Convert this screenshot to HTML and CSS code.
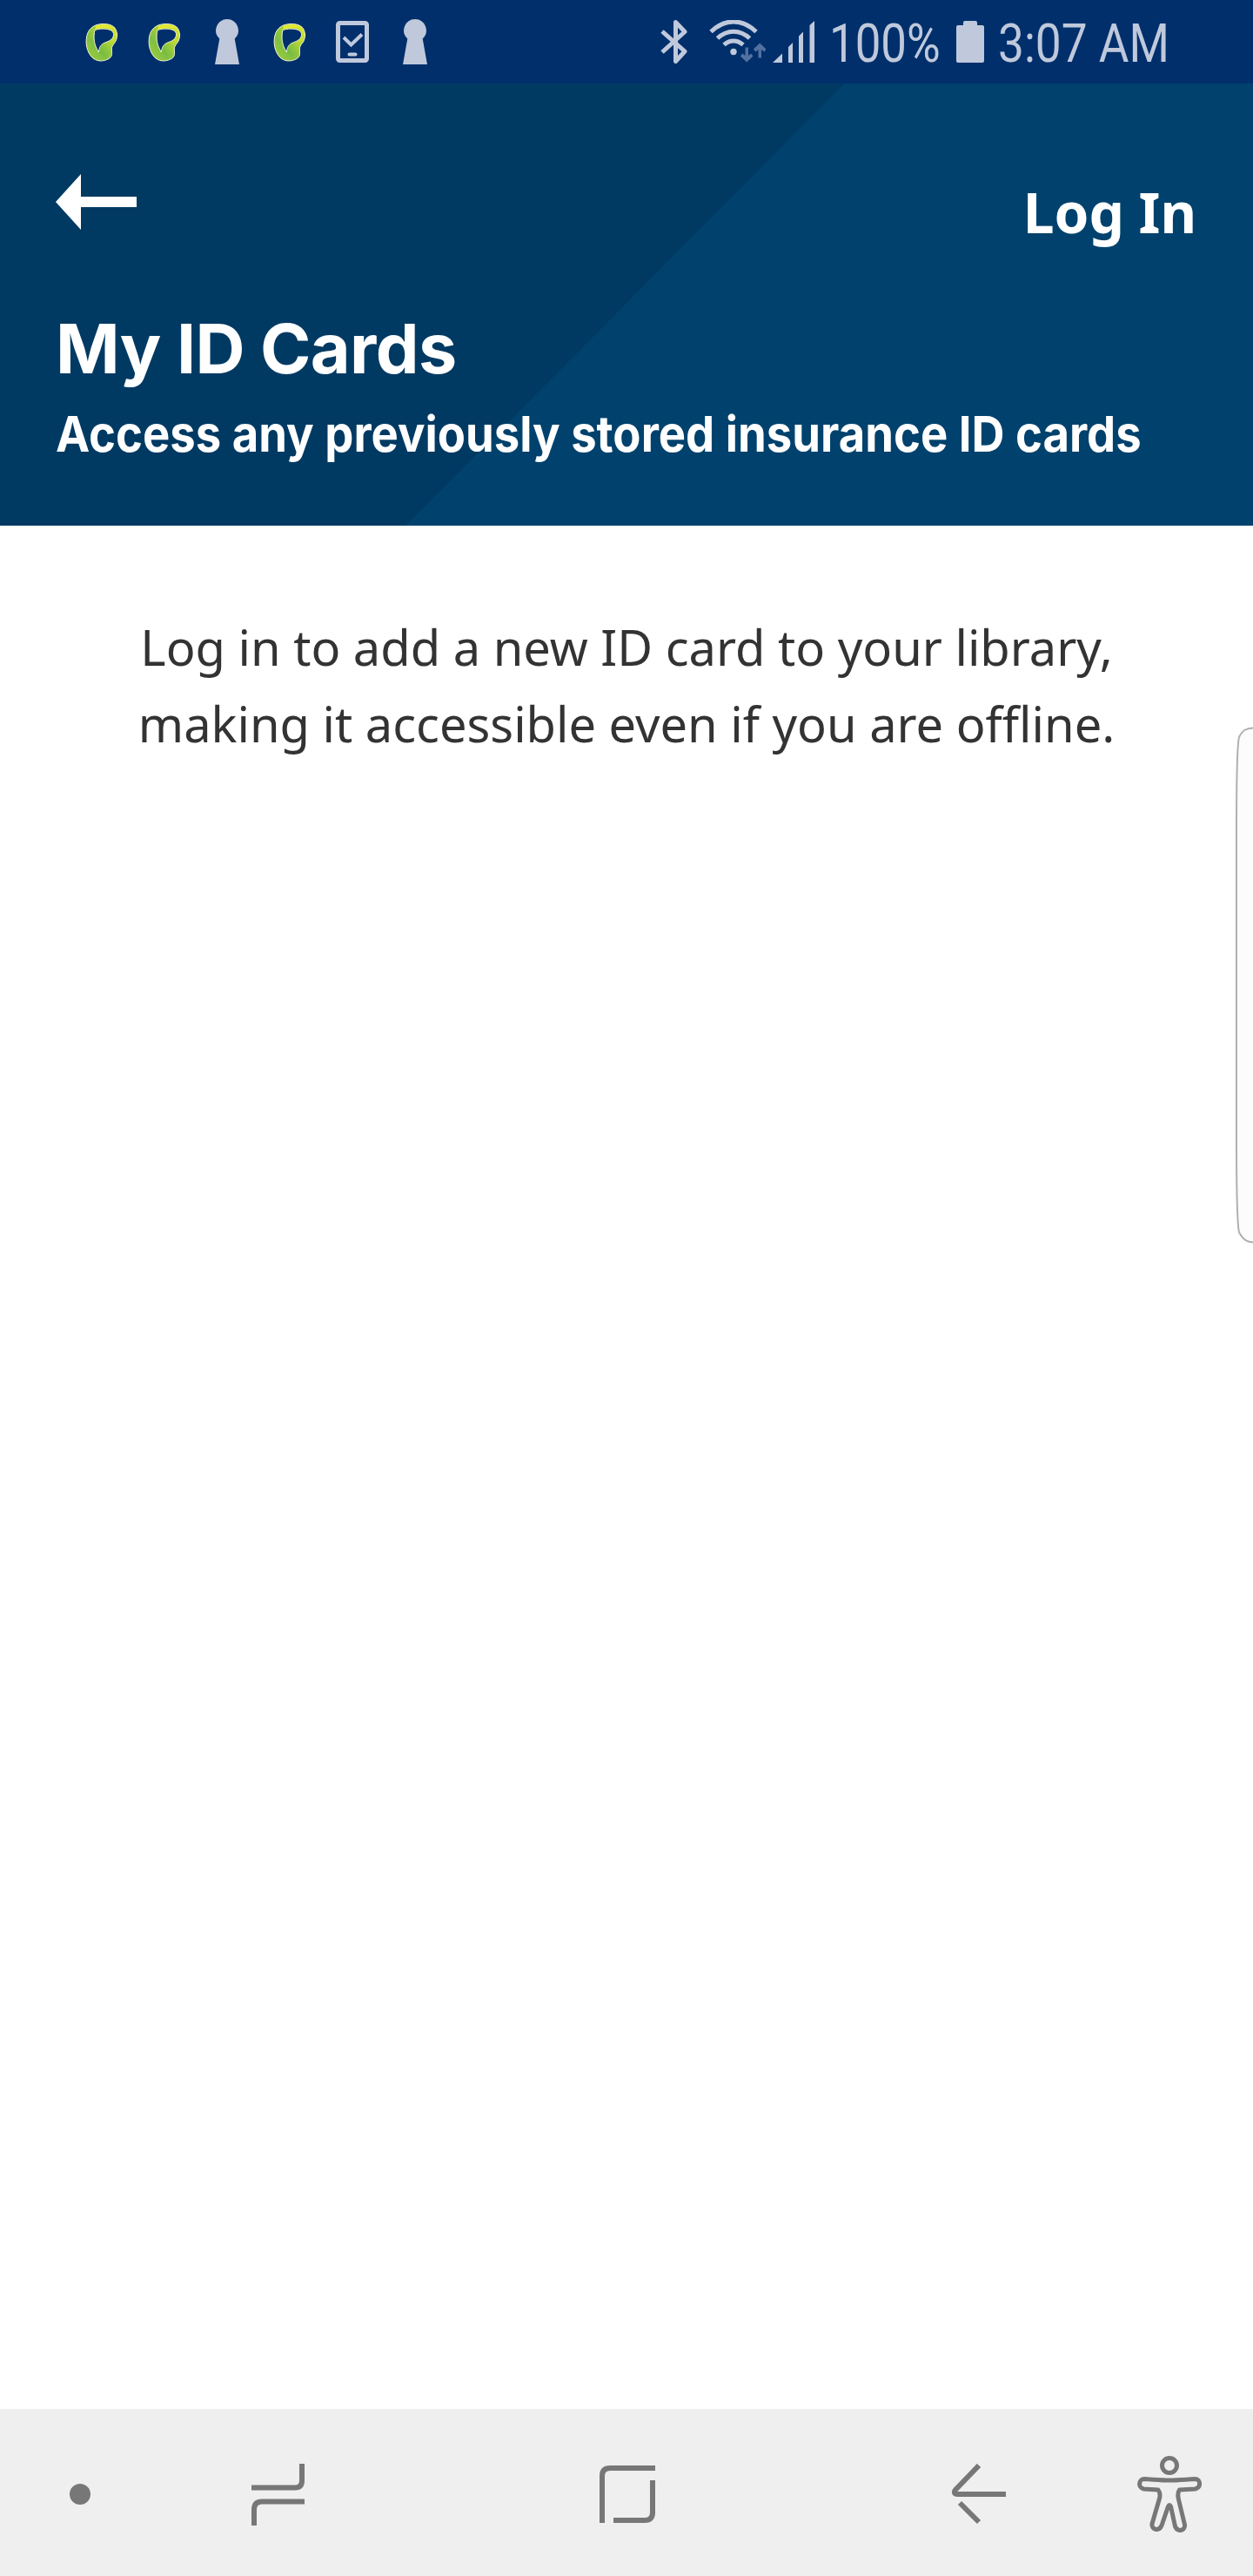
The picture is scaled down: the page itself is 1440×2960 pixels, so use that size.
FILE: index.html
```html
<!DOCTYPE html>
<html lang="en">
<head>
<meta charset="utf-8">
<title>My ID Cards</title>
<link rel="stylesheet" href="styles.css">
</head>
<body>
<div class="screen">
  <svg width="0" height="0" class="defs" aria-hidden="true">
    <defs>
      <linearGradient id="ring" x1="0" y1="1" x2="1" y2="0"><stop offset="0" stop-color="#a6d13a"/><stop offset=".35" stop-color="#80bf43"/><stop offset=".7" stop-color="#b4d636"/><stop offset="1" stop-color="#e6ec2c"/></linearGradient>
      <linearGradient id="fold" x1="0" y1="1" x2="1" y2="0"><stop offset="0" stop-color="#69b445"/><stop offset=".5" stop-color="#98cb3b"/><stop offset="1" stop-color="#dce62e"/></linearGradient>
      <symbol id="loop" viewBox="0 0 38 46">
        <path fill="url(#ring)" stroke="#f1f5d2" stroke-width="1" fill-rule="evenodd" d="M12 3C19 .4 31 .8 34.500 7c3.500 6 2.500 13-2.500 18.500-1.500 2-2 4-1.500 8 .500 5-1.500 7-4.500 8.500C20 45 12 45 7 39 2 33 .3 25 1.500 17 2.500 10 6 5.500 12 3ZM11 8.500C9 17 10 26 15.500 34 16 28 18 24.500 24 22.500 29.500 20.500 33 17.500 32.500 12.500 31 6.500 19 6 11 8.500Z"/>
        <path fill="url(#fold)" d="M16.200 34C16.500 28 18.500 25 24.500 23c4-1.400 7.500-4 8-7.500 1.500 4-.500 7.500-3.500 11-1.500 3-.500 6-.500 9-1 4-10 3-12.300-1.500Z"/>
        <path fill="#e3e92f" d="M12 4c6-2.500 17-2.500 20 3-6-2-14-1.500-20.500 1Z"/>
      </symbol>
      <symbol id="keyhole" viewBox="0 0 28 52"><path fill="#bfc9db" d="M14 0a13 13 0 0 1 8.700 22.500L28 52H0L5.300 22.500A13 13 0 0 1 14 0Z"/></symbol>
    </defs>
  </svg>

  <div class="status">
    <div class="notices">
      <svg class="loop"><use href="#loop"/></svg>
      <svg class="loop"><use href="#loop"/></svg>
      <svg class="keyhole"><use href="#keyhole"/></svg>
      <svg class="loop"><use href="#loop"/></svg>
      <svg class="device" viewBox="0 0 38 48"><g fill="none" stroke="#bfc9db"><rect x="2.500" y="2.500" width="33" height="43" rx="2" stroke-width="5"/><path d="m9 19 8.500 8.500L30 15.500" stroke-width="4"/><path d="M15.500 38.500h7" stroke-width="4" stroke-linecap="round"/></g></svg>
      <svg class="keyhole"><use href="#keyhole"/></svg>
    </div>
    <div class="system">
      <svg class="bluetooth" viewBox="0 0 32 50"><path d="m2 13 26 23-10.500 11.500v-45L28 13.500 2 37" fill="none" stroke="#bfc9db" stroke-width="5" stroke-linejoin="round"/></svg>
      <svg class="wifi" viewBox="0 0 65 50"><g fill="none" stroke="#bfc9db" stroke-width="5"><path d="M2 13.500C18-2 38-2 54 13.500"/><path d="M9.500 21c11-10.500 26-10.500 37 0"/><path d="M17 28.500c6.500-6 15.500-6 22 0"/></g><circle cx="28" cy="36.500" r="3.700" fill="#bfc9db"/><path d="M41.500 31.500h3.500v9.500l3-2.500 2.500 3-7.300 7-7.300-7 2.500-3 3.100 2.500ZM56.500 43.500h3.500v-9.500l3.300 2.500 2.200-3-7.300-7-7.300 7 2.500 3 3.100-2.500Z" fill="#53719f"/></svg>
      <svg class="signal" viewBox="0 0 48 48"><path fill="#bfc9db" d="M0 48 11 37.500V48ZM18 48V30l5-5v23ZM30 48V17.500l5-5V48ZM42.500 48V5L48 0v48Z"/></svg>
      <span class="percent"><span>100%</span></span>
      <svg class="battery" viewBox="0 0 32 48"><path fill="#bfc9db" d="M10 0h12q2 0 2 2v3h6q2 0 2 2v39q0 2-2 2H2q-2 0-2-2V7q0-2 2-2h6V2q0-2 2-2Z"/></svg>
      <span class="clock"><span>3:07 AM</span></span>
    </div>
  </div>

  <header class="header">
    <div class="actions">
      <svg class="back" viewBox="0 0 93 64"><path fill="#fff" d="M0 32 29 0v26h64v12H29v26Z"/></svg>
      <a class="login">Log In</a>
    </div>
    <h1 class="title">My ID Cards</h1>
    <p class="subtitle">Access any previously stored insurance ID cards</p>
  </header>

  <main class="content">
    <p class="message"><span class="line">Log in to add a new ID card to your library,</span><span class="line">making it accessible even if you are offline.</span></p>
  </main>

  <svg class="edge" viewBox="0 0 20 594" preserveAspectRatio="none"><path d="M22 1.500C12 1.500 8 4 4 12 2 20 1 70 1 120V474C1 530 2 572 4 581 9 590 13 592.500 22 592.500" fill="#fcfcfc" stroke="#b0b0b0" stroke-width="2"/></svg>

  <nav class="navbar">
    <svg width="24" height="24" viewBox="0 0 24 24"><circle cx="12" cy="12" r="12" fill="#777"/></svg>
    <svg width="61" height="71" viewBox="0 0 61 71"><path d="M0 27.500h50q8 0 8-8V0M61 43.500H12q-9 0-9 9V71"/></svg>
    <svg width="64" height="66" viewBox="0 0 64 66"><path d="M3 66V12q0-9 9-9h52M61 17v37q0 9-9 9H16"/></svg>
    <svg width="62" height="70" viewBox="0 0 62 70"><path d="M31 2 4.500 29.500c-3 3.500-1.500 5.500 2 5.500H62M9 45l22 22"/></svg>
    <svg width="74" height="88" viewBox="0 0 74 88"><g stroke-width="5" stroke-linejoin="round"><circle cx="37" cy="11" r="8.500"/><path d="M7.500 26.500C18 27 27 28 37 28s19-1 29.500-1.500c6 0 7.500 9.500 0 11.500l-18 1c-2 3-2 7-1 11l7 29c1 7-8 9-11 2L38.500 58c-1-2-2-2-3 0L28 80c-3 7-12 5-11-2l8.500-29c1-4 1-7-1.500-10L7.500 38c-7-1.500-6-11 0-11.500Z"/></g></svg>
  </nav>
</div>
</body>
</html>
```

FILE: styles.css
```css
* { box-sizing: border-box; }
body { margin: 0; background: #fff; }
h1, p { margin: 0; }
svg { display: block; flex: none; }
.defs { position: absolute; }

.screen {
  position: relative;
  display: flex;
  flex-direction: column;
  width: 1440px;
  height: 2960px;
  background: #fff;
  overflow: hidden;
}

.status {
  display: flex;
  justify-content: space-between;
  height: 96px;
  padding: 0 97px 0 98px;
  background: #002f6c;
}
.notices, .system { display: flex; align-items: flex-start; }
.notices { padding-top: 22px; }
.loop { width: 38px; height: 46px; margin: 4px 34px 0 0; }
.keyhole { width: 28px; height: 52px; margin: 0 39px 0 5px; }
.device { width: 38px; height: 48px; margin: 2px 34px 0 0; }
.system { padding-top: 23px; }
.bluetooth { width: 32px; height: 50px; margin-right: 24px; }
.wifi { width: 65px; height: 50px; margin-right: 8px; }
.signal { width: 48px; height: 48px; margin: 1px 17px 0 0; }
.battery { width: 32px; height: 48px; margin: 1px 16px 0 0; }
.percent, .clock {
  display: block;
  height: 50px;
  color: #bfc9db;
  font: 400 61px/54px Roboto, sans-serif;
  white-space: nowrap;
}
.percent { width: 131px; margin-right: 15px; }
.clock { width: 196px; }
.percent span, .clock span { display: inline-block; transform-origin: 0 50%; }
.percent span { transform: scaleX(.865); }
.clock span { transform: scaleX(.872); }

.header {
  height: 508px;
  padding: 104px 65px 0 64px;
  color: #fff;
  background: linear-gradient(to bottom right, #003a63 50%, #00426d 50.1%) 466px 0 / 504px 508px no-repeat, linear-gradient(90deg, #003a63 720px, #00426d 720px);
}
.actions { display: flex; justify-content: space-between; height: 155px; }
.back { width: 93px; height: 64px; }
.login { font: 700 64px/87px "Noto Sans", sans-serif; }
.title { font: 700 79px/90px Inter, sans-serif; letter-spacing: -.6px; white-space: nowrap; }
.subtitle {
  width: max-content;
  margin-top: 19px;
  font: 700 57px/70px Inter, sans-serif;
  white-space: nowrap;
  transform: scaleX(.923);
  transform-origin: 0 50%;
}

.content { flex: 1; padding-top: 95px; }
.message { color: #333; font: 400 56px/88px "Noto Sans", sans-serif; text-align: center; }
.line { display: block; white-space: nowrap; }

.edge { position: absolute; right: 0; top: 835px; width: 20px; height: 594px; }

.navbar {
  display: grid;
  grid-template-columns: 184px 271px 532px 275px 163px;
  place-items: center;
  height: 192px;
  padding-top: 4px;
  background: #efefef;
}
.navbar path, .navbar g { fill: none; stroke: #777; }
.navbar > svg > path { stroke-width: 6; }
```
